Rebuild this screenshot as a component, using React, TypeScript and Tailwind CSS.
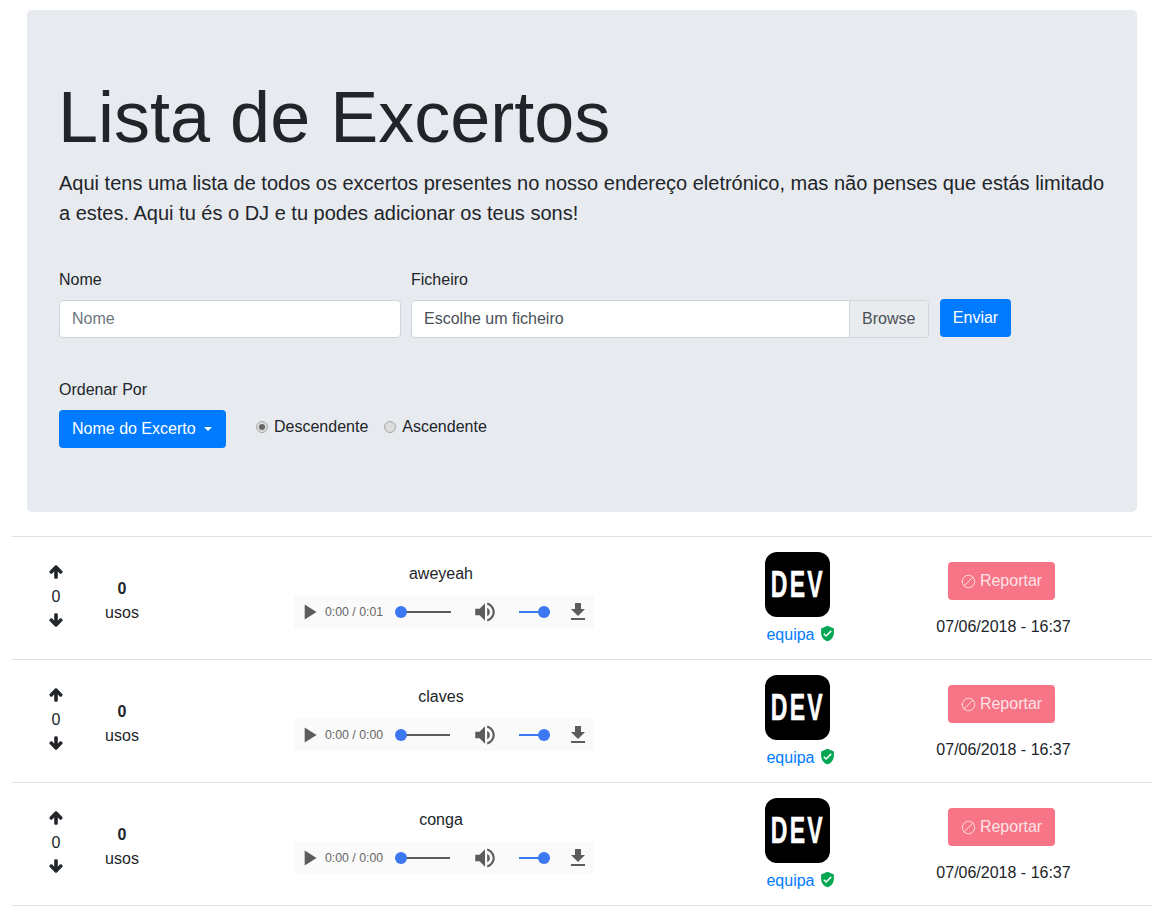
import React from 'react';
import { FaArrowUp, FaArrowDown } from 'react-icons/fa';
import { Ban } from 'lucide-react';
import { MdVerifiedUser, MdVolumeUp, MdFileDownload, MdPlayArrow } from 'react-icons/md';

interface Sound {
  name: string;
  duration: string;
  trackWidth: string;
}

const sounds: Sound[] = [
  { name: 'aweyeah', duration: '0:01', trackWidth: 'w-[50px]' },
  { name: 'claves', duration: '0:00', trackWidth: 'w-[49px]' },
  { name: 'conga', duration: '0:00', trackWidth: 'w-[49px]' },
];

const AudioBar: React.FC<{ duration: string; trackWidth: string }> = ({ duration, trackWidth }) => (
  <div className="flex items-center w-[300px] h-[32px] ml-[6px] bg-[#fafafa] text-[#5c5c5c]">
    <MdPlayArrow className="w-[26px] h-[26px] ml-[2px] shrink-0" />
    <span className="ml-[3px] w-[76px] text-[12.3px] text-[#666] whitespace-nowrap">0:00 / {duration}</span>
    <div className={`relative h-[2px] bg-[#5c5c5c] ${trackWidth}`}>
      <div className="absolute left-[-6px] top-[-5px] w-[12px] h-[12px] rounded-full bg-[#3b78f1]" />
    </div>
    <div className="flex-1" />
    <MdVolumeUp className="w-[26px] h-[26px] mr-[21px] shrink-0" />
    <div className="relative w-[31px] h-[2px] bg-[#3b78f1] mr-[16px]">
      <div className="absolute right-[0px] top-[-5px] w-[12px] h-[12px] rounded-full bg-[#3b78f1]" />
    </div>
    <MdFileDownload className="w-[24px] h-[24px] mr-[4px] shrink-0" />
  </div>
);

const SoundRow: React.FC<{ sound: Sound }> = ({ sound }) => (
  <div className="grid grid-cols-[88px_44px_594px_124px_1fr] h-[123px] border-t border-[#dee2e6] text-[#212529]">
    <div className="flex flex-col items-center pt-[23px]">
      <div className="h-[24px] flex items-center">
        <FaArrowUp className="w-[14px] h-[14px]" stroke="currentColor" strokeWidth={50} />
      </div>
      <span className="h-[24px] leading-[26px]">0</span>
      <div className="h-[24px] flex items-center">
        <FaArrowDown className="w-[14px] h-[14px]" stroke="currentColor" strokeWidth={50} />
      </div>
    </div>
    <div className="flex flex-col items-center pt-[40px] leading-[24px]">
      <span className="font-bold">0</span>
      <span>usos</span>
    </div>
    <div className="flex flex-col items-center pt-[25px]">
      <span className="leading-[24px] mb-[10px]">{sound.name}</span>
      <AudioBar duration={sound.duration} trackWidth={sound.trackWidth} />
    </div>
    <div className="flex flex-col items-center pt-[15px]">
      <div className="w-[65px] h-[65px] mr-[6px] rounded-[12px] bg-black flex items-center justify-center">
        <span className="scale-x-[0.64] pl-[2px] text-[36px] leading-none font-bold tracking-[3.5px] text-white [-webkit-text-stroke:0.5px_white]">DEV</span>
      </div>
      <div className="flex items-center mt-[6px] pl-[2px] leading-[24px]">
        <span className="text-[#007bff]">equipa</span>
        <MdVerifiedUser className="w-[17px] h-[17px] ml-[4px] mb-[3px] text-[#00a651]" />
      </div>
    </div>
    <div className="flex flex-col items-center pt-[25px] pr-[7px]">
      <div className="flex items-center justify-center w-[107px] h-[38px] mr-[4px] rounded-[4px] bg-[#f77587] text-[#fde3e6]">
        <Ban className="w-[15px] h-[15px] mr-[4px] -scale-x-100" strokeWidth={1.5} />
        Reportar
      </div>
      <span className="leading-[24px] mt-[15px]">07/06/2018 - 16:37</span>
    </div>
  </div>
);

export default function App() {
  return (
    <div className="font-['Liberation_Sans',sans-serif] text-[16px] leading-[24px] text-[#212529] bg-white min-h-[912px]">
      <div className="pt-[10px] pl-[27px]">
        <div className="w-[1110px] bg-[#e7eaef] rounded-[5px] px-[32px] py-[64px]">
          <h1 className="text-[72px] leading-[86.4px] font-light mb-[8px] ml-[-1px]">Lista de Excertos</h1>
          <p className="text-[20px] leading-[30px] mb-[40px]">
            Aqui tens uma lista de todos os excertos presentes no nosso endereço eletrónico, mas não penses que estás limitado a estes. Aqui tu és o DJ e tu podes adicionar os teus sons!
          </p>
          <div className="flex items-end">
            <div className="w-[342px] mr-[10px]">
              <div className="mb-[8px]">Nome</div>
              <div className="h-[38px] rounded-[4px] border border-[#ced4da] bg-white px-[12px] leading-[36px] text-[#6c757d]">Nome</div>
            </div>
            <div className="w-[518px] mr-[11px]">
              <div className="mb-[8px]">Ficheiro</div>
              <div className="flex h-[38px] rounded-[4px] border border-[#ced4da] bg-white leading-[36px] overflow-hidden">
                <span className="flex-1 px-[12px] text-[#495057]">Escolhe um ficheiro</span>
                <span className="px-[12px] w-[79px] border-l border-[#ced4da] bg-[#e9ecef] text-[#495057]">Browse</span>
              </div>
            </div>
            <div className="h-[38px] w-[71px] mb-[1px] rounded-[4px] bg-[#007bff] text-white flex items-center justify-center">Enviar</div>
          </div>
          <div className="mt-[40px] mb-[8px]">Ordenar Por</div>
          <div className="flex items-center">
            <div className="flex items-center h-[38px] w-[167px] px-[13px] rounded-[4px] bg-[#007bff] text-white whitespace-nowrap">
              Nome do Excerto
              <span className="ml-[8px] border-x-[4.8px] border-x-transparent border-t-[4.8px] border-t-white" />
            </div>
            <div className="flex items-center ml-[30px] mb-[4px]">
              <span className="flex items-center justify-center w-[12px] h-[12px] rounded-full border border-[#a8a8a8] bg-[#dcdcdc]">
                <span className="w-[6px] h-[6px] rounded-full bg-[#666]" />
              </span>
              <span className="ml-[6px]">Descendente</span>
              <span className="ml-[16px] w-[12px] h-[12px] rounded-full border border-[#a8a8a8] bg-[#dcdcdc]" />
              <span className="ml-[6px]">Ascendente</span>
            </div>
          </div>
        </div>
      </div>
      <div className="mt-[24px] ml-[12px] w-[1140px] border-b border-[#dee2e6]">
        {sounds.map((s) => (
          <SoundRow key={s.name} sound={s} />
        ))}
      </div>
    </div>
  );
}
